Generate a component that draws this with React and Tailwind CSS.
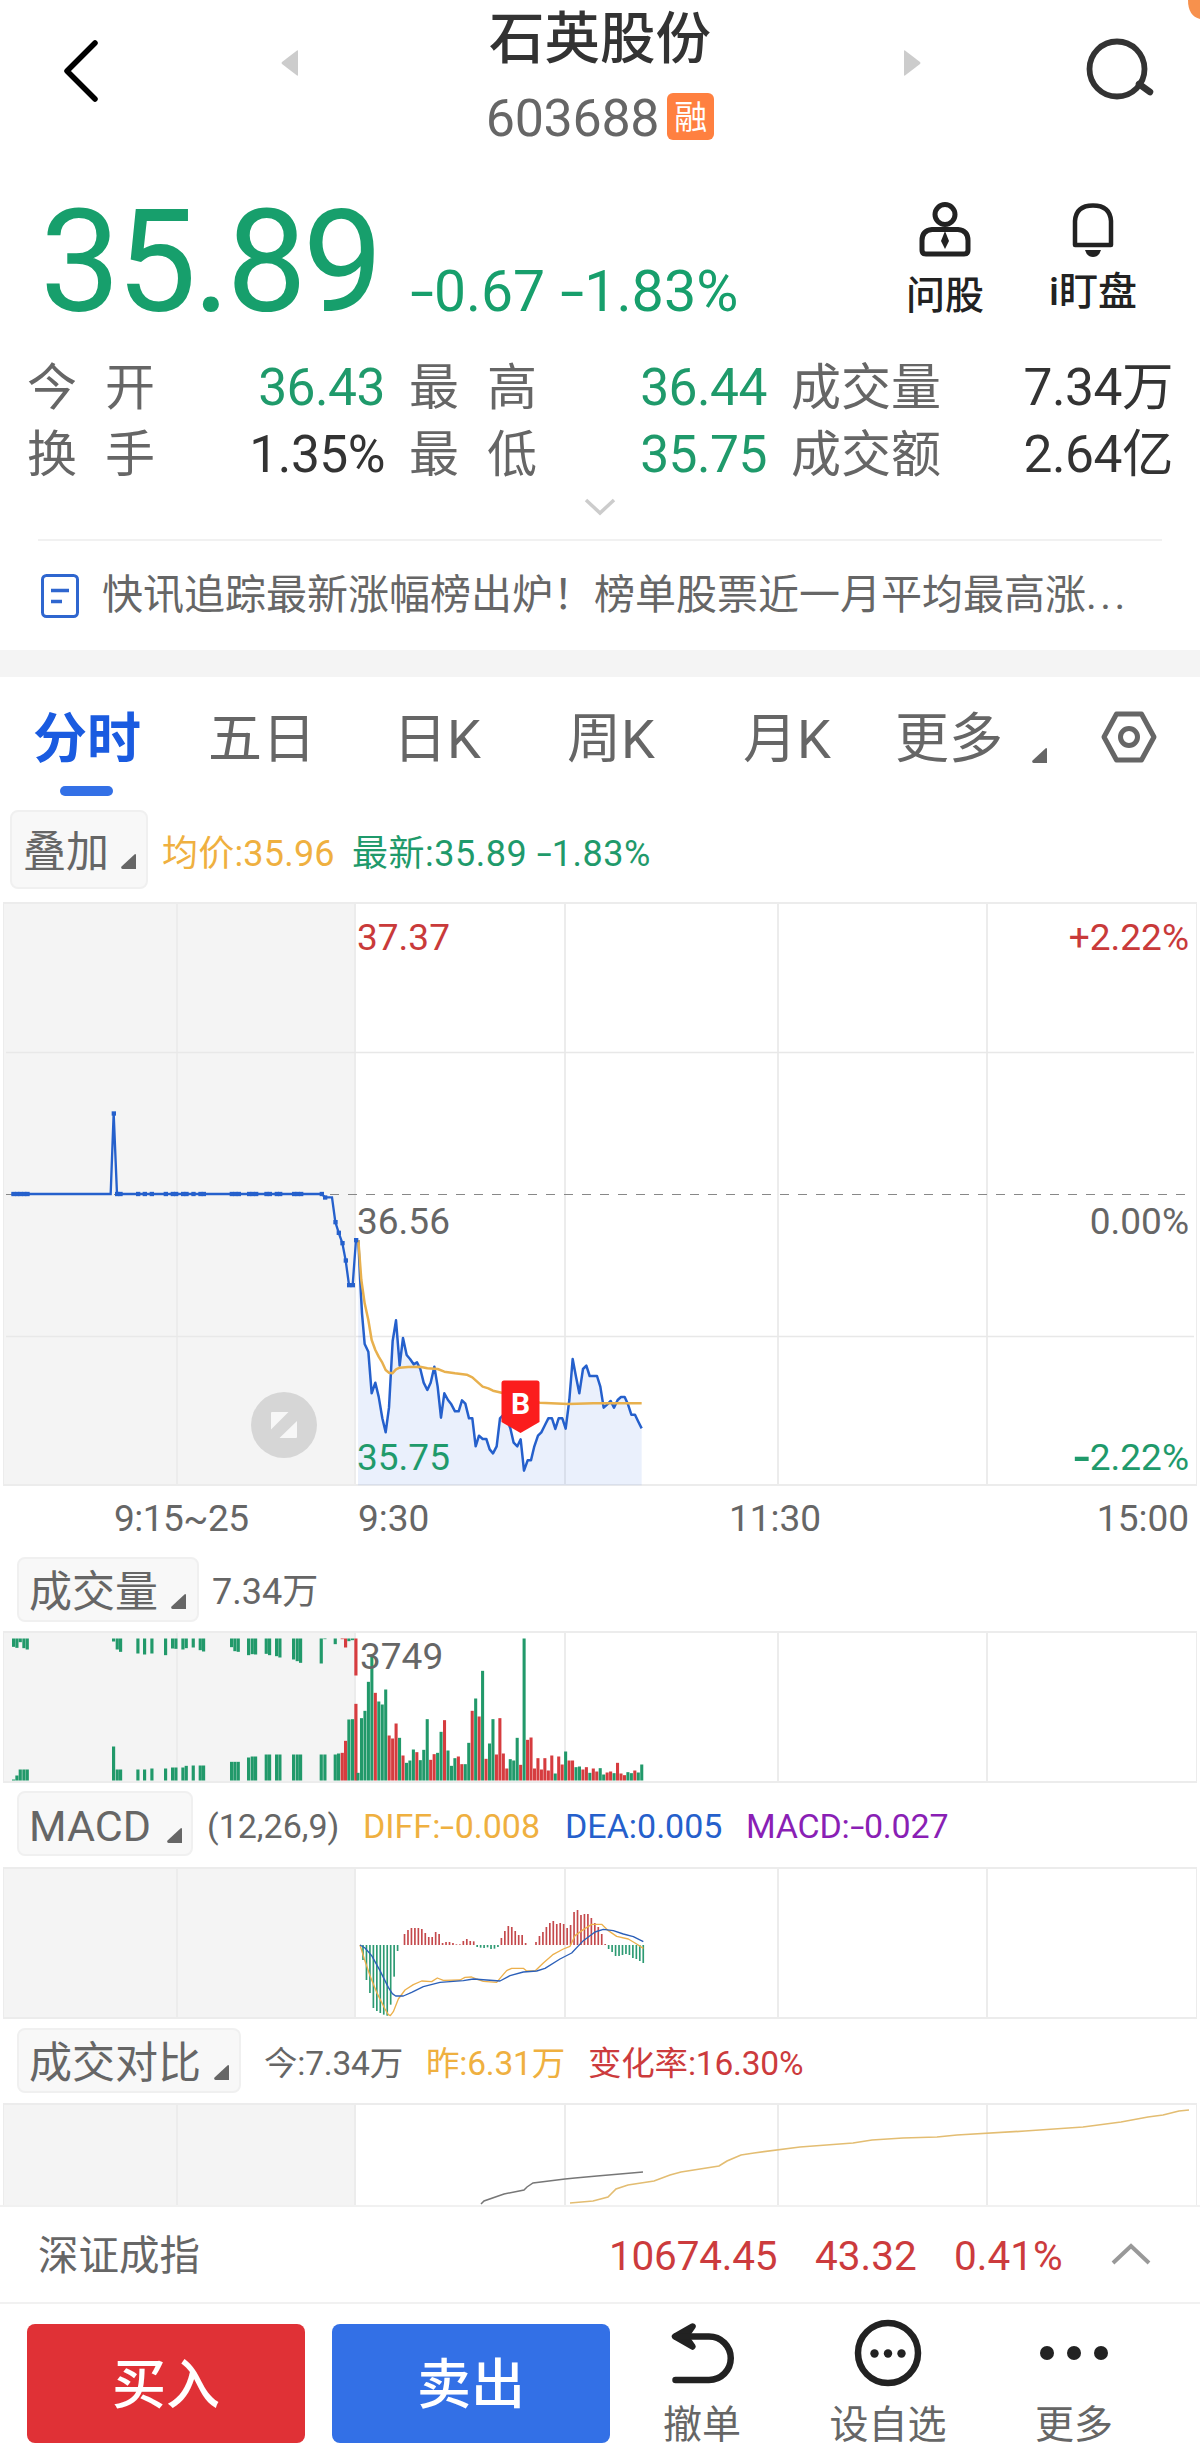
import clsx from 'clsx'

const quotes = [
  [
    { label: ['今', '开'], value: '36.43', green: true },
    { label: ['最', '高'], value: '36.44', green: true },
    { label: ['成', '交', '量'], value: '7.34万' },
  ],
  [
    { label: ['换', '手'], value: '1.35%' },
    { label: ['最', '低'], value: '35.75', green: true },
    { label: ['成', '交', '额'], value: '2.64亿' },
  ],
]

const quoteCols = [
  { label: 'w-[128px]', cell: 'w-[358px] mr-[24px]' },
  { label: 'w-[128px]', cell: 'w-[358px] mr-[24px]' },
  { label: 'w-[150px]', cell: 'w-[382px]' },
]

const tabs = [
  { name: '五日', box: 'w-[185px]' },
  { name: '日K', box: 'w-[174px]' },
  { name: '周K', box: 'w-[176px]' },
  { name: '月K', box: 'w-[152px]' },
]

const gridX = [177, 355, 565, 778, 987]

// all series below are in thirds of a pixel
const auctionLine =
  '35,342 332,342 341,100 351,342 965,342 975,352 996,352 1006,426 1016,458 1027,489 1037,541 1047,615 1058,615 1068,480'

const auctionDots = [
  40, 51, 61, 72, 82, 351, 361, 414, 434, 455, 497, 518, 528, 549, 559, 580, 601, 611, 695, 706, 716,
  747, 757, 768, 799, 809, 830, 840, 882, 892, 903, 965,
]

const fallDots = [
  [341, 100], [975, 352], [1006, 426], [1016, 458], [1027, 489], [1037, 541], [1047, 615], [1058, 615], [1068, 480],
]

const priceLine =
  '115,180 120,290 126,400 134,492 145,515 155,640 166,608 176,650 187,715 197,757 207,683 218,483 228,421 239,557 249,474 260,525 270,537 281,553 291,547 301,567 311,608 322,630 332,608 343,560 353,620 363,713 373,640 384,660 394,673 405,694 416,694 426,661 436,671 447,715 457,715 467,799 477,767 488,777 499,777 509,808 519,820 530,799 540,715 550,705 560,715 571,745 581,788 592,799 602,778 612,872 623,841 633,841 643,799 654,767 664,757 675,735 685,715 696,715 706,747 716,715 727,715 737,746 748,660 758,537 768,590 778,640 789,567 799,557 809,588 831,588 841,620 851,683 862,673 872,663 882,683 893,660 903,651 914,651 924,673 934,704 945,704 955,725 965,745'

const avgLine =
  '115,180 124,300 134,370 145,420 155,480 166,510 176,530 187,548 197,570 207,578 217,580 228,568 239,563 265,561 300,560 322,565 353,567 373,575 405,580 440,584 457,592 488,620 505,625 519,632 545,638 600,650 659,668 745,672 820,670 965,670'

// [x, bottom of the hanging bar, top of the standing bar, rising]
const auctionVol = [
  [41, 82, 480], [51, 85, 468], [61, 68, 450], [72, 86, 450], [82, 90, 450], [341, 66, 381], [352, 90, 450],
  [362, 97, 450], [414, 102, 450], [434, 105, 450], [456, 102, 447], [497, 107, 447], [518, 87, 444],
  [528, 88, 444], [549, 90, 444], [559, 86, 439], [580, 84, 438], [601, 92, 438], [611, 96, 438],
  [695, 83, 427], [705, 95, 427], [715, 97, 427], [746, 107, 414], [757, 104, 411], [767, 105, 411],
  [799, 103, 405], [809, 107, 405], [830, 110, 405], [840, 114, 405], [881, 120, 405], [892, 125, 405],
  [902, 130, 405], [964, 132, 405], [975, 59, 405], [1006, 74, 405], [1016, 57, 402], [1027, 59, 400, true],
  [1037, 84, 364, true], [1047, 65, 300], [1058, 62, 299], [1068, 168, 253, true],
]

const volume =
  'g460 g296 g274 g187 g105 r220 g246 g255 g210 r348 r357 r312 g355 r408 g430 g423 g390 r398 g422 g391 g299 r421 r404 g400 g337 r302 g393 g439 g416 r411 r434 g434 g370 r274 g237 r291 g154 r418 g372 g299 r405 r296 r402 r447 g419 g423 g355 r436 g57 r361 r354 r447 r416 r450 r416 r453 r408 g462 r411 r435 g396 r423 r423 g443 g441 r450 r443 g460 r447 r456 g446 g465 r459 r456 g461 r430 r462 r467 g458 g461 r453 g459 g435'.split(' ')

const macd = [
  -45, -105, -144, -189, -198, -204, -209, -212, -179, -95, -18, 0, 33, 45, 51, 51, 51, 48, 36, 24, 24, 39, 33,
  6, 9, 9, 6, 2, 2, 12, 18, 12, 11, -6, -8, -9, -7, -12, -11, -6, 21, 42, 57, 54, 42, 30, 30, 6, 0, 0, 9, 27,
  39, 54, 66, 72, 63, 66, 63, 51, 60, 99, 105, 90, 93, 93, 81, 66, 54, 33, 3, -12, -21, -33, -33, -30, -27, -30,
  -39, -42, -48, -54,
]

const diffLine =
  '90,258 103,300 120,350 140,400 165,450 175,467 181,470 190,458 205,420 225,393 250,377 275,366 305,368 322,357 340,364 390,363 405,355 425,354 440,360 460,367 500,370 515,352 530,335 545,328 580,328 590,336 615,336 640,312 670,286 700,270 720,262 735,230 760,212 785,196 815,196 835,215 860,232 895,240 920,255 940,268'

const deaLine =
  '90,258 105,267 125,290 150,335 175,385 187,404 197,411 220,411 245,400 280,383 330,370 400,365 430,360 470,363 510,366 540,350 580,339 620,336 645,328 690,300 725,282 760,245 795,219 820,211 850,215 880,225 910,233 940,248'

const todayLine = '481,101 484,98 504,91 524,87 527,84 533,80 565,76 575,75 597,73 643,69'
const yesterdayLine =
  '570,100 593,98 608,94 611,91 616,86 628,82 654,78 670,72 681,69 719,63 727,58 741,52 754,50 800,44 853,40 872,37 903,35 937,34 957,32 1025,28 1083,24 1121,19 1148,14 1163,12 1179,8 1189,7'

// wide minus sign, as the numeric font draws it
function Minus() {
  return <span className="inline-block w-[.42em] scale-x-150 text-center">-</span>
}

function Corner({ className }) {
  return (
    <svg width="15" height="15" viewBox="0 0 15 15" className={clsx('shrink-0', className)}>
      <path d="M14 0a1 1 0 0 1 1 1v14H1.500Q-.5 14.500.5 12.500Z" fill="#666" />
    </svg>
  )
}

function Chip({ children, className }) {
  return (
    <div className={clsx('flex shrink-0 items-center rounded-lg border-2 border-[#f0f0f0] bg-[#f8f8f8] text-[43px] text-[#666]', className)}>
      <span className="pt-[5px]">{children}</span>
      <Corner className="mt-[24px] ml-auto" />
    </div>
  )
}

// shaded auction area, frame and column lines shared by every panel
function Grid({ height, line = '#ececec' }) {
  return (
    <>
      <rect x="3" y="0" width="352" height={height} fill="#f4f4f4" />
      {gridX.map((x) => (
        <rect key={x} x={x - 1} y="0" width="2" height={height} fill={line} />
      ))}
      <rect x="3" y="0" width="1" height={height} fill={line} />
      <rect x="1196" y="0" width="1" height={height} fill={line} />
      <rect x="3" y="0" width="1194" height="2" fill={line} />
      <rect x="3" y={height - 2} width="1194" height="2" fill={line} />
    </>
  )
}

function Header() {
  return (
    <header className="flex h-[170px] justify-between">
      <svg width="300" height="170" viewBox="0 0 300 170">
        <path d="M95 43 67 71l28 28" fill="none" stroke="#000" strokeWidth="5.500" strokeLinecap="round" strokeLinejoin="round" />
        <path d="M298 51v24q0 1-1 .500L282 64q-1-1 0-2L297 50.500q1-.5 1 .500Z" fill="#ccc" />
      </svg>
      <div className="flex flex-col items-center">
        <h1 className="mt-[12px] h-[56px] text-[55.500px] leading-[56px] font-medium text-[#333]">石英股份</h1>
        <div className="mt-[18px] flex items-center gap-[8px]">
          <span className="pt-[5px] text-[52px] leading-[56px] tracking-[-0.3px] text-[#666]">603688</span>
          <span className="flex size-[47px] items-center justify-center rounded-md bg-[#ff8040] pt-[2px] text-[33px] leading-none text-white">融</span>
        </div>
      </div>
      <svg width="300" height="170" viewBox="900 0 300 170">
        <path d="M904 51v24q0 1 1 .500L920 64q1-1 0-2L905 50.500q-1-.5-1 .500Z" fill="#ccc" />
        <circle cx="1117" cy="69" r="27.500" fill="none" stroke="#333" strokeWidth="5.800" />
        <path d="m1139 84 11 8" stroke="#333" strokeWidth="6.500" strokeLinecap="round" />
        <path d="M1188 0h12v19q-12-3-12-19Z" fill="#f7914d" />
      </svg>
    </header>
  )
}

function Price() {
  return (
    <section className="flex h-[184px] text-[#179f6c]">
      <div className="flex items-baseline pl-[40px] leading-[184px]">
        <span className="w-[370px] text-[143px] tracking-[-4px]">35.89</span>
        <span className="w-[150px] text-[57px]"><Minus />0.67</span>
        <span className="text-[57.500px]"><Minus />1.83%</span>
      </div>
      <div className="ml-auto flex text-[39px] font-medium text-[#222]">
        <div className="flex w-[150px] flex-col items-center pt-[31px]">
          <svg width="52" height="56" viewBox="0 0 52 56" fill="none" stroke="#222" strokeWidth="5">
            <circle cx="26" cy="13.500" r="10" />
            <path d="M13 28.500h26q10 1 10 11V49q0 4-4 4H7q-4 0-4-4v-9.500q0-10 10-11Z" />
            <path d="m26 30 4 10-4 8-4-8Z" fill="#222" stroke="none" />
          </svg>
          <span className="mt-[17px] leading-[44px]">问股</span>
        </div>
        <div className="flex w-[180px] flex-col items-center pt-[31px] pr-[34px]">
          <svg width="44" height="56" viewBox="0 0 44 56">
            <path d="M4 44V20Q5 4.500 22 4.500T40 20v24H4Z" fill="none" stroke="#222" strokeWidth="4.500" strokeLinejoin="round" />
            <path d="M14 49h16q-2 7-8 7t-8-7Z" fill="#222" />
          </svg>
          <span className="mt-[13px] leading-[44px]">i盯盘</span>
        </div>
      </div>
    </section>
  )
}

function Quotes() {
  return (
    <section className="h-[185px]">
      {quotes.map((row, r) => (
        <div key={r} className="flex h-[67px] items-center pl-[27px]">
          {row.map((q, i) => (
            <div key={i} className={clsx('flex items-center', quoteCols[i].cell)}>
              <span className={clsx('flex justify-between text-[50px] text-[#666]', quoteCols[i].label)}>
                {q.label.map((c) => (
                  <span key={c}>{c}</span>
                ))}
              </span>
              <span className={clsx('ml-auto text-[51.500px] tracking-[-0.5px]', q.green ? 'text-[#1f9a6b]' : 'text-[#333]')}>{q.value}</span>
            </div>
          ))}
        </div>
      ))}
      <svg width="34" height="20" viewBox="0 0 34 20" className="mx-auto mt-[9px]">
        <path d="m3 3 14 13L31 3" fill="none" stroke="#ccc" strokeWidth="3.500" />
      </svg>
    </section>
  )
}

function News() {
  return (
    <section className="mx-[38px] flex h-[111px] items-center border-t-2 border-[#f1f1f1]">
      <svg width="40" height="46" viewBox="0 0 40 46" fill="none" stroke="#2f66cf" strokeWidth="3" className="ml-[2px]">
        <rect x="2.500" y="2.500" width="35" height="41" rx="4" />
        <path d="M11 17.500h18M11 28.500h11" strokeWidth="3.500" />
      </svg>
      <p className="ml-[22px] text-[41px] whitespace-nowrap text-[#666]">
        快讯追踪最新涨幅榜出炉！榜单股票近一月平均最高涨<span className="tracking-[3.500px]">...</span>
      </p>
    </section>
  )
}

function Tabs() {
  return (
    <nav className="box-content flex h-[133px] border-t-[27px] border-[#f4f4f4] text-[54px] text-[#666]">
      <div className="ml-[33px] flex w-[175px] flex-col">
        <span className="h-[109px] leading-[125px] font-bold text-[#1a5be0]">分时</span>
        <span className="ml-[27px] h-[10px] w-[53px] rounded-full bg-[#3370e6]" />
      </div>
      {tabs.map((t) => (
        <span key={t.name} className={clsx('leading-[125px]', t.box)}>
          {t.name}
        </span>
      ))}
      <span className="w-[119px] leading-[125px]">更多</span>
      <Corner className="mt-[71px] ml-[18px]" />
      <svg width="58" height="54" viewBox="0 0 58 54" fill="none" stroke="#666" strokeWidth="5" className="mt-[33px] ml-[53px]">
        <path d="M16.500 4h25L54 27 41.500 50h-25L4 27Z" strokeLinejoin="round" />
        <circle cx="29" cy="27" r="8.500" />
      </svg>
    </nav>
  )
}

function PriceChart() {
  return (
    <svg width="1200" height="584" viewBox="0 0 1200 584" className="text-[37px]">
      <Grid height={584} />
      <path d="M6 150.500H1194M6 434.500H1194" stroke="#e8e8e8" strokeWidth="1.500" />
      <path d="M6 292.500H1194" stroke="#888" strokeWidth="1" strokeDasharray="9 9" />
      <text x="357" y="48" fill="#c93a3a">37.37</text>
      <text x="1189" y="48" fill="#c93a3a" textAnchor="end">+2.22%</text>
      <text x="1189" y="332" fill="#666" textAnchor="end">0.00%</text>
      <text x="1189" y="568" fill="#1f9a6b" textAnchor="end">
        <tspan fontSize="58" dy="6">-</tspan>
        <tspan dy="-6">2.22%</tspan>
      </text>
      <g transform="translate(320 278) scale(.33333)" fill="none" strokeLinejoin="round">
        <polygon points={`114,916 ${priceLine} 965,916`} fill="#3370e6" fillOpacity=".1" />
        <polyline points={priceLine} stroke="#2560cc" strokeWidth="7.500" />
        <polyline points={avgLine} stroke="#e8b04d" strokeWidth="7.500" />
      </g>
      <g transform="translate(0 178) scale(.33333)">
        <polyline points={auctionLine} fill="none" stroke="#2560cc" strokeWidth="7" />
        {auctionDots.map((x) => (
          <rect key={x} x={x - 6} y="335.500" width="13" height="13" fill="#2560cc" />
        ))}
        {fallDots.map(([x, y]) => (
          <rect key={x} x={x - 6} y={y - 6} width="13" height="13" fill="#2560cc" />
        ))}
      </g>
      <text x="357" y="332" fill="#666">36.56</text>
      <text x="357" y="568" fill="#1f9a6b">35.75</text>
      <circle cx="284" cy="523" r="33" fill="#d6d6d6" />
      <path d="M272 510h16.500L271 527.500V511Q271 510 272 510ZM297 519v16q0 1-1 1H279.500Z" fill="#f7f7f7" />
      <path d="M504 478.500h33q2.500 0 2.500 2.500v39L520.500 531 501.500 520V481q0-2.500 2.500-2.500Z" fill="#fb1d1d" />
      <text x="520.500" y="512" fill="#fff" fontSize="30" fontWeight="700" textAnchor="middle">B</text>
    </svg>
  )
}

function VolumeChart() {
  return (
    <svg width="1200" height="152" viewBox="0 0 1200 152">
      <Grid height={152} />
      <g transform="translate(0 -11.500) scale(.33333)">
        {auctionVol.map(([x, hang, top, up]) => (
          <g key={x} fill={up ? '#d63c3f' : '#21996a'}>
            <rect x={x - 5} y="57" width="9.500" height={hang - 57} />
            <rect x={x - 5} y={top} width="9.500" height={483 - top} />
          </g>
        ))}
        {volume.map((v, i) => (
          <rect
            key={i}
            x={1069.5 + i * 10.38}
            y={v.slice(1)}
            width="9.200"
            height={483 - v.slice(1)}
            fill={v[0] === 'r' ? '#d63c3f' : '#21996a'}
          />
        ))}
      </g>
      <text x="360" y="38" fill="#666" fontSize="37">3749</text>
    </svg>
  )
}

function MacdChart() {
  return (
    <svg width="1200" height="152" viewBox="0 0 1200 152">
      <Grid height={152} />
      <g transform="translate(330 -8) scale(.33333)" fill="none" strokeLinejoin="round">
        {macd.map((v, i) => (
          <rect
            key={i}
            x={96.5 + i * 10.38}
            y={v > 0 ? 258 - v : 258}
            width="5"
            height={Math.abs(v)}
            fill={v > 0 ? '#c4484b' : '#2c9a72'}
          />
        ))}
        <polyline points={diffLine} stroke="#ecb04c" strokeWidth="4" />
        <polyline points={deaLine} stroke="#2b5fb8" strokeWidth="4" />
      </g>
    </svg>
  )
}

function CompareChart() {
  return (
    <svg width="1200" height="102" viewBox="0 0 1200 102">
      <Grid height={106} />
      <polyline points={todayLine} fill="none" stroke="#777" strokeWidth="1.500" />
      <polyline points={yesterdayLine} fill="none" stroke="#e3bd72" strokeWidth="1.700" />
    </svg>
  )
}

function IndexBar() {
  return (
    <section className="flex h-[99px] items-center border-y-2 border-[#f1f1f1] pl-[38px] text-[40.500px]">
      <span className="pt-[4px] text-[#666]">深证成指</span>
      <span className="ml-auto flex pt-[3px] text-[#cc3b3d]">
        <span className="w-[206px] tracking-[-0.2px]">10674.45</span>
        <span className="w-[139px]">43.32</span>
        <span className="w-[156px]">0.41%</span>
      </span>
      <svg width="42" height="24" viewBox="0 0 42 24" className="mr-[48px] mb-[2px]">
        <path d="m3 21 18-17 18 17" fill="none" stroke="#999" strokeWidth="4" />
      </svg>
    </section>
  )
}

function Actions() {
  return (
    <footer className="flex h-[158px] text-[39px] text-[#666]">
      <button className="mt-[20px] ml-[27px] h-[119px] w-[278px] rounded-lg bg-[#e03136] pt-[5px] text-[54px] font-medium text-white">买入</button>
      <button className="mt-[20px] ml-[27px] h-[119px] w-[278px] rounded-lg bg-[#3370e6] pt-[5px] text-[54px] font-medium text-white">卖出</button>
      <div className="ml-[42px] flex w-[100px] flex-col items-center pt-[15px]">
        <svg width="68" height="68" viewBox="0 0 68 68" fill="none" stroke="#222" strokeWidth="6.500" strokeLinecap="round" strokeLinejoin="round">
          <path d="M24.500 7.500 7 17.500l17.500 10-7-10Z" fill="#222" />
          <path d="M8 17.500h33a21.500 21.500 0 0 1 0 43.500H7.500" />
        </svg>
        <span className="mt-[16px] leading-[44px]">撤单</span>
      </div>
      <div className="ml-[61px] flex w-[150px] flex-col items-center pt-[15px]">
        <svg width="68" height="68" viewBox="0 0 68 68">
          <circle cx="34" cy="34" r="30" fill="none" stroke="#222" strokeWidth="6.500" />
          <circle cx="20.500" cy="34.500" r="4.200" fill="#222" />
          <circle cx="34" cy="34.500" r="4.200" fill="#222" />
          <circle cx="47.500" cy="34.500" r="4.200" fill="#222" />
        </svg>
        <span className="mt-[16px] leading-[44px]">设自选</span>
      </div>
      <div className="ml-[61px] flex w-[100px] flex-col items-center pt-[15px]">
        <svg width="68" height="68" viewBox="0 0 68 68" fill="#222">
          <circle cx="7" cy="34" r="7" />
          <circle cx="34" cy="34" r="7" />
          <circle cx="61" cy="34" r="7" />
        </svg>
        <span className="mt-[16px] leading-[44px]">更多</span>
      </div>
    </footer>
  )
}

export default function App() {
  return (
    <div className="h-[2463px] w-[1200px] overflow-hidden bg-white font-[Roboto,'Noto_Sans_CJK_SC',sans-serif] leading-none [&_svg]:shrink-0">
      <Header />
      <Price />
      <Quotes />
      <News />
      <Tabs />

      <div className="flex h-[92px] pl-[10px] text-[36px]">
        <Chip className="h-[79px] w-[138px] pr-[10px] pl-[11px]">叠加</Chip>
        <span className="ml-[14px] w-[190px] leading-[89px] tracking-[0.2px] text-[#efb040]">均价:35.96</span>
        <span className="leading-[89px] tracking-[0.5px] text-[#1f9a6b]">最新:35.89 <Minus />1.83%</span>
      </div>
      <PriceChart />
      <div className="flex h-[71px] text-[37px] leading-[65px] text-[#666]">
        <span className="ml-[114px] w-[244px] tracking-[-0.5px]">9:15~25</span>
        <span className="w-[371px]">9:30</span>
        <span>11:30</span>
        <span className="mr-[11px] ml-auto">15:00</span>
      </div>

      <div className="flex h-[74px] pl-[17px] text-[36px] text-[#666]">
        <Chip className="h-[65px] w-[182px] pr-[11px] pl-[10px]">成交量</Chip>
        <span className="ml-[13px] leading-[70px]">7.34万</span>
      </div>
      <VolumeChart />

      <div className="mt-[8px] flex h-[76px] pl-[17px] text-[34px] leading-[71px]">
        <Chip className="h-[65px] w-[176px] pr-[9px] pl-[10px]">MACD</Chip>
        <span className="ml-[14px] w-[156px] text-[#666]">(12,26,9)</span>
        <span className="w-[202px] text-[#efb040]">DIFF:<Minus />0.008</span>
        <span className="w-[181px] text-[#2560cc]">DEA:0.005</span>
        <span className="tracking-[-0.2px] text-[#8a1fb5]">MACD:<Minus />0.027</span>
      </div>
      <MacdChart />

      <div className="mt-[9px] flex h-[75px] pl-[17px] text-[33.500px] leading-[71px] tracking-[-0.2px]">
        <Chip className="h-[65px] w-[224px] pr-[10px] pl-[10px] tracking-normal">成交对比</Chip>
        <span className="ml-[23px] w-[162px] text-[#666]">今:7.34万</span>
        <span className="w-[162px] text-[#efb040]">昨:6.31万</span>
        <span className="text-[#cc3b3d]">变化率:16.30%</span>
      </div>
      <CompareChart />

      <IndexBar />
      <Actions />
    </div>
  )
}
